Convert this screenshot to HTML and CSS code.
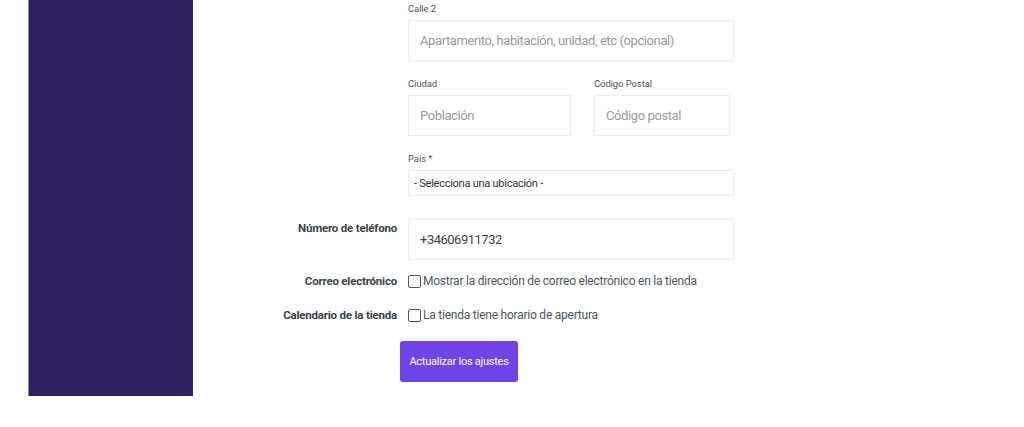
FILE: index.html
```html
<!DOCTYPE html>
<html lang="es">
<head>
<meta charset="utf-8">
<link rel="stylesheet" href="styles.css">
</head>
<body>
<div class="page">
  <aside class="sidebar"></aside>
  <main class="main">
    <div class="row">
      <div class="label-col"></div>
      <div class="field-col">
        <div class="sub-label">Calle 2</div>
        <div class="input wide"><span class="ph">Apartamento, habitación, unidad, etc (opcional)</span></div>
        <div class="split">
          <div class="city">
            <div class="sub-label">Ciudad</div>
            <div class="input"><span class="ph">Población</span></div>
          </div>
          <div class="zip">
            <div class="sub-label">Código Postal</div>
            <div class="input"><span class="ph">Código postal</span></div>
          </div>
        </div>
        <div class="sub-label">País *</div>
        <div class="select">- Selecciona una ubicación -</div>
      </div>
    </div>
    <div class="row phone-row">
      <div class="label-col"><span class="main-label">Número de teléfono</span></div>
      <div class="field-col">
        <div class="input wide"><span class="val">+34606911732</span></div>
      </div>
    </div>
    <div class="row check-row first">
      <div class="label-col"><span class="main-label">Correo electrónico</span></div>
      <div class="field-col check"><span class="box"></span><span class="check-text">Mostrar la dirección de correo electrónico en la tienda</span></div>
    </div>
    <div class="row check-row">
      <div class="label-col"><span class="main-label">Calendario de la tienda</span></div>
      <div class="field-col check"><span class="box"></span><span class="check-text">La tienda tiene horario de apertura</span></div>
    </div>
    <div class="actions">
      <button class="btn">Actualizar los ajustes</button>
    </div>
  </main>
</div>
</body>
</html>
```
FILE: styles.css
```css
* { box-sizing: border-box; }
html, body { margin: 0; padding: 0; background: #fff; }
body { font-family: Roboto, "Noto Sans", sans-serif; color: #3c434a; }
.page { display: flex; align-items: flex-start; }
.sidebar {
  margin-left: 28px;
  width: 165px;
  height: 396px;
  background: #312062;
  border-left: 1px solid #8c80b0;
  flex: none;
}
.main { flex: 1; padding-top: 1px; }
.row { display: flex; gap: 11px; }
.label-col { width: 204px; text-align: right; flex: none; }
.field-col { width: 326px; flex: none; }
.sub-label {
  font-size: 9.5px;
  letter-spacing: -0.1px;
  line-height: 14px;
  color: #555;
  margin-bottom: 5px;
  padding-top: 1px;
  height: 14px;
}
.input {
  height: 41px;
  border: 1px solid #ececec;
  display: flex;
  align-items: center;
  padding-left: 11px;
  font-size: 13px;
  letter-spacing: -0.4px;
}
.ph { color: #9a9a9a; }
.val { color: #3c434a; letter-spacing: -0.5px; }
.input.wide { margin-bottom: 15px; }
.split { display: flex; gap: 23px; }
.city { width: 163px; }
.zip { width: 136px; }
.split .input { margin-bottom: 15px; }
.select {
  height: 26px;
  border: 1px solid #ececec;
  font-size: 11px;
  letter-spacing: -0.25px;
  color: #333;
  display: flex;
  align-items: center;
  padding-left: 5px;
}
.phone-row { margin-top: 23px; }
.phone-row .input.wide { margin-bottom: 0; }
.main-label {
  display: block;
  font-size: 11.5px;
  letter-spacing: -0.2px;
  font-weight: 700;
  color: #3c434a;
  line-height: 18px;
}
.check-row { height: 20px; align-items: center; margin-top: 14px; }
.check-row.first { margin-top: 11px; }
.check-row .main-label { line-height: 20px; }
.check { display: flex; align-items: center; gap: 2px; }
.box { width: 13px; height: 13px; border: 1px solid #50575e; border-radius: 2px; background: #fff; flex: none; }
.check-text { font-size: 12px; letter-spacing: -0.23px; color: #50575e; }
.actions { padding-left: 207px; margin-top: 16px; }
.btn {
  background: #6e44e8;
  color: #fff;
  border: none;
  border-radius: 3px;
  font-family: Roboto, sans-serif;
  font-size: 11px;
  letter-spacing: -0.25px;
  height: 41px;
  width: 118px;
  padding: 0;
}
```
